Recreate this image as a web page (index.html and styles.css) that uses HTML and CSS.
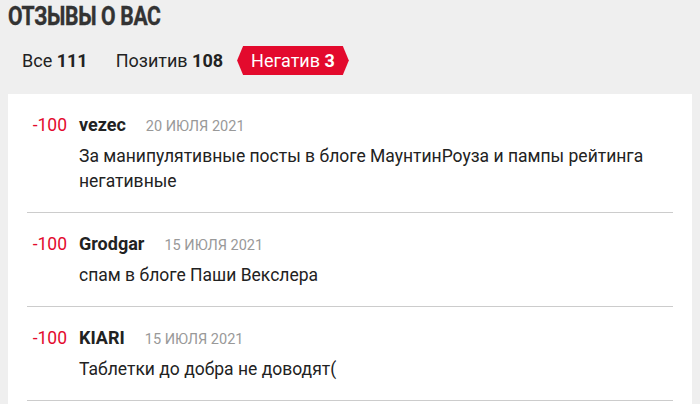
FILE: index.html
```html
<!DOCTYPE html>
<html lang="ru">
<head>
<meta charset="utf-8">
<link rel="stylesheet" href="styles.css">
</head>
<body>
<div class="page">
  <h1 class="title">ОТЗЫВЫ О ВАС</h1>
  <div class="tabs">
    <span class="tab">Все <b>111</b></span>
    <span class="tab">Позитив <b>108</b></span>
    <span class="tab active">Негатив <b>3</b></span>
  </div>
  <div class="card">
    <div class="review">
      <div class="score">-100</div>
      <div class="body">
        <div class="head"><span class="name">vezec</span><span class="date">20 июля 2021</span></div>
        <div class="text">За манипулятивные посты в блоге МаунтинРоуза и пампы рейтинга негативные</div>
      </div>
    </div>
    <div class="review">
      <div class="score">-100</div>
      <div class="body">
        <div class="head"><span class="name">Grodgar</span><span class="date">15 июля 2021</span></div>
        <div class="text">спам в блоге Паши Векслера</div>
      </div>
    </div>
    <div class="review">
      <div class="score">-100</div>
      <div class="body">
        <div class="head"><span class="name">KIARI</span><span class="date">15 июля 2021</span></div>
        <div class="text">Таблетки до добра не доводят(</div>
      </div>
    </div>
  </div>
</div>
</body>
</html>
```
FILE: styles.css
```css
html, body {
  margin: 0;
  padding: 0;
  background: #efefef;
  font-family: Roboto, "Noto Sans", Arial, sans-serif;
  color: #222;
}
.page {
  padding: 3px 8px 0 8px;
}
.title {
  margin: 0;
  font-size: 25px;
  line-height: 28px;
  font-weight: 700;
  color: #333;
  letter-spacing: -0.4px;
  transform: scaleX(0.845);
  transform-origin: left center;
  -webkit-text-stroke: 0.4px #333;
}
.tabs {
  display: flex;
  margin-top: 15px;
  font-size: 18px;
}
.tab {
  padding: 1px 14px 0 14px;
  height: 28px;
  line-height: 28px;
  color: #222;
}
.tab b { font-weight: 700; }
.tab.active {
  background: #e30a2d;
  color: #fff;
  clip-path: polygon(6px 0, calc(100% - 6px) 0, 100% 50%, calc(100% - 6px) 100%, 6px 100%, 0 50%);
}
.card {
  margin-top: 19px;
  background: #fff;
  padding: 0 19px 20px 19px;
}
.review {
  display: flex;
  gap: 12px;
  padding: 19px 0 18px 0;
  border-bottom: 1px solid #ccc;
}
.score {
  width: 40px;
  text-align: right;
  font-size: 17.5px;
  line-height: 24px;
  color: #e30a2d;
}
.body { flex: 1; }
.head {
  display: flex;
  align-items: baseline;
  gap: 20px;
  height: 24px;
  line-height: 24px;
}
.name {
  font-size: 18px;
  font-weight: 700;
  color: #222;
}
.date {
  font-size: 14.5px;
  color: #999;
  text-transform: uppercase;
}
.text {
  margin-top: 7px;
  font-size: 17.5px;
  line-height: 25px;
  color: #222;
}
```
